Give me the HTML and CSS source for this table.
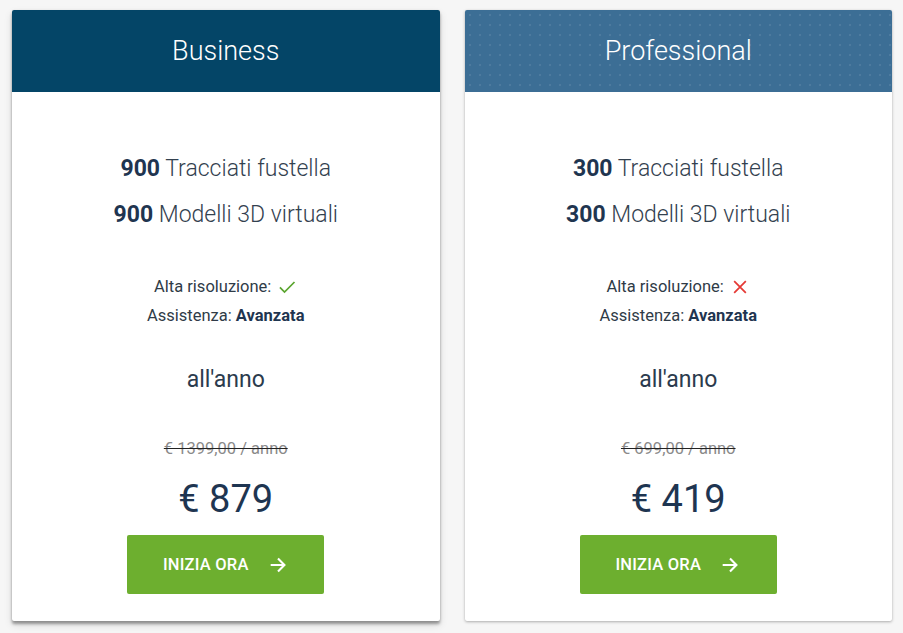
FILE: index.html
```html
<!DOCTYPE html>
<html lang="it">
<head>
<meta charset="utf-8">
<title>Piani</title>
<link rel="stylesheet" href="styles.css">
</head>
<body>
<div class="plans">
  <div class="card card-raised">
    <div class="head head-business">Business</div>
    <div class="body">
      <div class="features">
        <div><b>900</b> Tracciati fustella</div>
        <div><b>900</b> Modelli 3D virtuali</div>
      </div>
      <div class="meta">
        <div>Alta risoluzione: <svg class="icon" width="20" height="20" viewBox="0 0 24 24"><path d="M3.5 12.5 L9 18 L21 6" fill="none" stroke="#5ba52f" stroke-width="2.1"/></svg></div>
        <div>Assistenza: <b>Avanzata</b></div>
      </div>
      <div class="period">all'anno</div>
      <div class="old">€ 1399,00 / anno</div>
      <div class="price">€ 879</div>
      <a class="btn" href="#">INIZIA ORA <svg width="22" height="22" viewBox="0 0 24 24"><path d="M4 12 H19 M12 5 L19 12 L12 19" fill="none" stroke="#fff" stroke-width="2.3"/></svg></a>
    </div>
  </div>
  <div class="card">
    <div class="head head-pro">Professional</div>
    <div class="body">
      <div class="features">
        <div><b>300</b> Tracciati fustella</div>
        <div><b>300</b> Modelli 3D virtuali</div>
      </div>
      <div class="meta">
        <div>Alta risoluzione: <svg class="icon" width="20" height="20" viewBox="0 0 24 24"><path d="M5 5 L19 19 M19 5 L5 19" fill="none" stroke="#e53935" stroke-width="2.1"/></svg></div>
        <div>Assistenza: <b>Avanzata</b></div>
      </div>
      <div class="period">all'anno</div>
      <div class="old">€ 699,00 / anno</div>
      <div class="price">€ 419</div>
      <a class="btn" href="#">INIZIA ORA <svg width="22" height="22" viewBox="0 0 24 24"><path d="M4 12 H19 M12 5 L19 12 L12 19" fill="none" stroke="#fff" stroke-width="2.3"/></svg></a>
    </div>
  </div>
</div>
</body>
</html>
```
FILE: styles.css
```css
html, body {
  margin: 0;
  padding: 0;
  background: #f6f6f6;
  font-family: Roboto, "Liberation Sans", sans-serif;
  height: 633px;
  overflow: hidden;
}
.plans {
  display: flex;
  gap: 25px;
  padding: 10px 11px 0 12px;
}
.card {
  flex: 1;
  background: #fff;
  box-shadow: 0 1px 3px rgba(0,0,0,0.3), 0 0 1px rgba(0,0,0,0.08);
  text-align: center;
  color: #2b3b4d;
  border-radius: 2px;
}
.card-raised {
  box-shadow: 0 3px 3px rgba(0,0,0,0.35), 0 4px 8px rgba(0,0,0,0.12), 0 0 2px rgba(0,0,0,0.08);
}
.head {
  height: 82px;
  display: flex;
  align-items: center;
  justify-content: center;
  color: #fff;
  font-size: 27px;
  font-weight: 300;
  border-radius: 2px 2px 0 0;
}
.head-business { background: #044567; }
.head-pro {
  background-color: #3c6e95;
  background-image: radial-gradient(circle, rgba(255,255,255,0.09) 0.7px, transparent 1.1px);
  background-size: 10px 10px;
}
.body {
  padding: 54px 0 27px;
  display: flex;
  flex-direction: column;
  align-items: center;
}
.features {
  font-size: 23px;
  font-weight: 300;
  line-height: 46px;
  color: #33414f;
}
.features b {
  font-weight: 700;
  color: #1f3550;
}
.meta {
  margin-top: 34px;
  font-size: 16.5px;
  line-height: 29px;
  color: #2f3b47;
}
.meta b { font-weight: 700; color: #1f3550; }
.icon {
  vertical-align: -5px;
  margin-left: 2px;
}
.period {
  margin-top: 35px;
  font-size: 23px;
  line-height: 30px;
  color: #2b3b4d;
}
.old {
  margin-top: 44px;
  font-size: 16.5px;
  line-height: 20px;
  color: #8a8a8a;
  text-decoration: line-through;
  text-decoration-color: #222;
}
.price {
  margin-top: 18px;
  font-size: 38px;
  line-height: 44px;
  color: #1e3551;
}
.btn {
  margin-top: 14px;
  width: 197px;
  height: 59px;
  background: #6daf2f;
  border-radius: 2px;
  color: #fff;
  text-decoration: none;
  font-size: 16.5px;
  font-weight: 500;
  letter-spacing: 0.2px;
  display: flex;
  align-items: center;
  justify-content: center;
  gap: 18px;
}
```
